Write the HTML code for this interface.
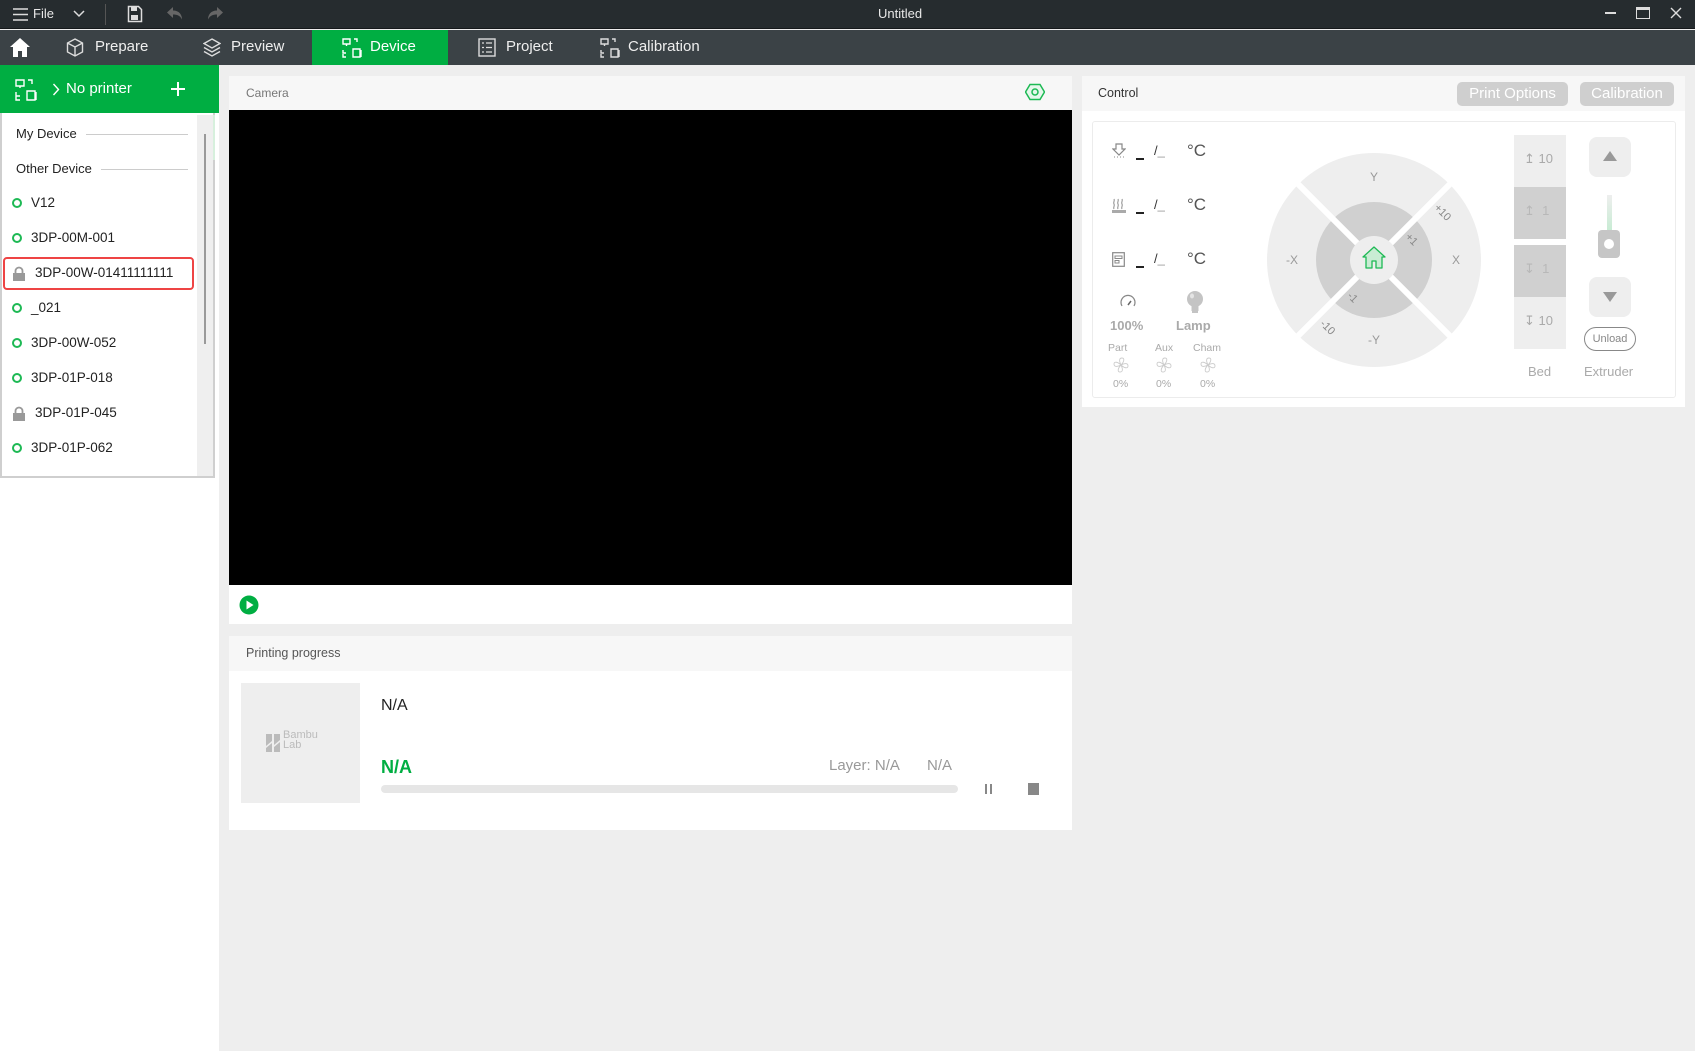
<!DOCTYPE html>
<html><head><meta charset="utf-8"><style>
*{margin:0;padding:0;box-sizing:border-box}
body{width:1695px;height:1051px;overflow:hidden;background:#eeeeee;font-family:"Liberation Sans",sans-serif;position:relative}
.a{position:absolute}
.t{position:absolute;white-space:nowrap}
</style></head><body>
<!-- title bar -->
<div class="a" style="left:0;top:0;width:1695px;height:29px;background:#262c2f;border-bottom:1px solid #15191b"></div>
<svg class="a" style="left:12px;top:7px" width="18" height="15"><path d="M1 2h15M1 7.5h15M1 13h15" stroke="#ddd" stroke-width="1.4"/></svg>
<div class="t" style="left:33px;top:6px;color:#e8e8e8;font-size:13px">File</div>
<svg class="a" style="left:73px;top:9px" width="12" height="10"><path d="M1 2l5 5 5-5" stroke="#ddd" stroke-width="1.5" fill="none"/></svg>
<div class="a" style="left:105px;top:4px;width:1px;height:21px;background:#555"></div>
<svg class="a" style="left:127px;top:5px" width="16" height="18"><path d="M1.5 1.5h10l3 3v12h-13z" fill="none" stroke="#ddd" stroke-width="1.5"/><rect x="4" y="2" width="6" height="4" fill="#ddd"/><rect x="4" y="10" width="7" height="5" fill="#ddd"/></svg>
<svg class="a" style="left:166px;top:6px" width="18" height="15"><path d="M7 1L1 6.5 7 12V8.5c4 0 7 1 9 5 0-5-3-9-9-9z" fill="#666"/></svg>
<svg class="a" style="left:206px;top:6px" width="18" height="15"><path d="M11 1l6 5.5-6 5.5V8.5c-4 0-7 1-9 5 0-5 3-9 9-9z" fill="#666"/></svg>
<div class="t" style="left:878px;top:6px;color:#e8e8e8;font-size:13px">Untitled</div>
<div class="a" style="left:1605px;top:12px;width:11px;height:1.5px;background:#ddd"></div>
<div class="a" style="left:1636px;top:7px;width:14px;height:12px;border:1.5px solid #ddd;border-top-width:3px"></div>
<svg class="a" style="left:1670px;top:7px" width="12" height="12"><path d="M1 1l10 10M11 1L1 11" stroke="#ddd" stroke-width="1.4"/></svg>
<!-- tab bar -->
<div class="a" style="left:0;top:30px;width:1695px;height:35px;background:#3b4246"></div>
<svg class="a" style="left:9px;top:37px" width="22" height="21"><path d="M11 1L1 10h3v10h5v-6h4v6h5V10h3z" fill="#fff"/></svg>
<svg class="a" style="left:66px;top:38px" width="18" height="19"><path d="M9 1l7.5 4v9L9 18 1.5 14V5zM1.5 5L9 9l7.5-4M9 9v9" fill="none" stroke="#ddd" stroke-width="1.4"/></svg>
<div class="t" style="left:95px;top:38px;color:#eee;font-size:15px">Prepare</div>
<svg class="a" style="left:203px;top:38px" width="18" height="19"><path d="M9 1l8 4.5-8 4.5-8-4.5zM1 9.5l8 4.5 8-4.5M1 13.5l8 4.5 8-4.5" fill="none" stroke="#ddd" stroke-width="1.4"/></svg>
<div class="t" style="left:231px;top:38px;color:#eee;font-size:15px">Preview</div>
<div class="a" style="left:312px;top:30px;width:136px;height:35px;background:#00ae42"></div>
<svg class="a" style="left:342px;top:38px" width="20" height="20"><path d="M1 1h7v5H1zM4.5 6v2M12 1h3v3M1 12v3h3M1 19h0M1 16v3h3M19 12v7M11 11h7v8h-7z" fill="none" stroke="#fff" stroke-width="1.4"/></svg>
<div class="t" style="left:370px;top:38px;color:#fff;font-size:15px">Device</div>
<svg class="a" style="left:478px;top:38px" width="18" height="19"><rect x="1" y="1" width="16" height="17" fill="none" stroke="#ddd" stroke-width="1.4"/><path d="M4 5h2M8 5h6M4 9.5h2M8 9.5h6M4 14h2M8 14h6" stroke="#ddd" stroke-width="1.3"/></svg>
<div class="t" style="left:506px;top:38px;color:#eee;font-size:15px">Project</div>
<svg class="a" style="left:600px;top:38px" width="20" height="20"><path d="M1 1h7v5H1zM4.5 6v2M12 1h3v3M1 12v3h3M1 16v3h3M19 12v7M11 11h7v8h-7z" fill="none" stroke="#ddd" stroke-width="1.4"/></svg>
<div class="t" style="left:628px;top:38px;color:#eee;font-size:15px">Calibration</div>
<!-- sidebar -->
<div class="a" style="left:0;top:65px;width:219px;height:986px;background:#fff"></div>
<div class="a" style="left:0;top:65px;width:219px;height:48px;background:#00ae42"></div>
<svg class="a" style="left:15px;top:79px" width="22" height="22"><path d="M1 1h8v6H1zM5 7v2M13 1h4v4M1 13v4h4M1 17v4h4M21 13v8M12 12h8v9h-8z" fill="none" stroke="#fff" stroke-width="1.4"/></svg>
<svg class="a" style="left:52px;top:83px" width="8" height="13"><path d="M1.5 1l5 5.5-5 5.5" fill="none" stroke="#fff" stroke-width="1.4"/></svg>
<div class="t" style="left:66px;top:80px;color:#fff;font-size:15px">No printer</div>
<svg class="a" style="left:170px;top:81px" width="16" height="16"><path d="M8 1v14M1 8h14" stroke="#fff" stroke-width="2"/></svg>
<div class="a" style="left:0;top:113px;width:215px;height:365px;border:2px solid #cfcfcf;border-top:none;background:#fff"></div>
<div class="a" style="left:197px;top:115px;width:16px;height:361px;background:#efefef"></div>
<div class="a" style="left:213px;top:115px;width:2px;height:45px;background:#d7f0dd"></div>
<div class="a" style="left:204px;top:134px;width:2px;height:210px;background:#9a9a9a"></div>
<div class="t" style="left:16px;top:126px;font-size:13px;color:#222">My Device</div>
<div class="a" style="left:86px;top:134px;width:102px;height:1px;background:#ccc"></div>
<div class="t" style="left:16px;top:161px;font-size:13px;color:#222">Other Device</div>
<div class="a" style="left:101px;top:169px;width:87px;height:1px;background:#ccc"></div>
<div class="a" style="left:3px;top:257px;width:191px;height:33px;border:2px solid #ee4444;border-radius:4px"></div>
<div style="position:absolute;left:0;top:0;font-size:13.5px;color:#222">
<div class="a" style="left:12px;top:198px;width:10px;height:10px;border:2px solid #1db954;border-radius:50%"></div><div class="t" style="left:31px;top:195px">V12</div>
<div class="a" style="left:12px;top:233px;width:10px;height:10px;border:2px solid #1db954;border-radius:50%"></div><div class="t" style="left:31px;top:230px">3DP-00M-001</div>
<svg class="a" style="left:12px;top:266px" width="14" height="15"><path d="M3.5 7V5a3.5 3.5 0 0 1 7 0v2" fill="none" stroke="#999" stroke-width="1.8"/><rect x="1" y="7" width="12" height="8" fill="#999"/></svg><div class="t" style="left:35px;top:265px">3DP-00W-01411111111</div>
<div class="a" style="left:12px;top:303px;width:10px;height:10px;border:2px solid #1db954;border-radius:50%"></div><div class="t" style="left:31px;top:300px">_021</div>
<div class="a" style="left:12px;top:338px;width:10px;height:10px;border:2px solid #1db954;border-radius:50%"></div><div class="t" style="left:31px;top:335px">3DP-00W-052</div>
<div class="a" style="left:12px;top:373px;width:10px;height:10px;border:2px solid #1db954;border-radius:50%"></div><div class="t" style="left:31px;top:370px">3DP-01P-018</div>
<svg class="a" style="left:12px;top:406px" width="14" height="15"><path d="M3.5 7V5a3.5 3.5 0 0 1 7 0v2" fill="none" stroke="#999" stroke-width="1.8"/><rect x="1" y="7" width="12" height="8" fill="#999"/></svg><div class="t" style="left:35px;top:405px">3DP-01P-045</div>
<div class="a" style="left:12px;top:443px;width:10px;height:10px;border:2px solid #1db954;border-radius:50%"></div><div class="t" style="left:31px;top:440px">3DP-01P-062</div>
</div>
<!-- camera panel -->
<div class="a" style="left:229px;top:76px;width:843px;height:548px;background:#fff"></div>
<div class="a" style="left:229px;top:76px;width:843px;height:34px;background:#f7f7f7"></div>
<div class="t" style="left:246px;top:86px;font-size:12px;color:#777">Camera</div>
<svg class="a" style="left:1025px;top:83px" width="20" height="18"><path d="M5 1.5h10l4.5 7.5-4.5 7.5H5L.5 9z" fill="#e6f7ec" stroke="#1db954" stroke-width="1.5"/><circle cx="10" cy="9" r="3" fill="none" stroke="#1db954" stroke-width="1.5"/></svg>
<div class="a" style="left:229px;top:110px;width:843px;height:475px;background:#000"></div>
<svg class="a" style="left:239px;top:595px" width="20" height="20"><circle cx="10" cy="10" r="9.5" fill="#00ae42"/><path d="M7.5 5.5v9l7-4.5z" fill="#fff"/></svg>
<!-- printing progress -->
<div class="a" style="left:229px;top:636px;width:843px;height:194px;background:#fff"></div>
<div class="a" style="left:229px;top:636px;width:843px;height:35px;background:#f7f7f7"></div>
<div class="t" style="left:246px;top:646px;font-size:12.5px;color:#555">Printing progress</div>
<div class="a" style="left:241px;top:683px;width:119px;height:120px;background:#eeeeee"></div>
<svg class="a" style="left:265px;top:733px" width="16" height="20"><path d="M1 1h6v7l-6 5zM9 1h6v6L9 12zM1 15l6-5v9H1zM9 14l6-5v10H9z" fill="#bbb"/></svg>
<div class="t" style="left:283px;top:730px;font-size:11px;color:#bbb;line-height:10px">Bambu<br>Lab</div>
<div class="t" style="left:381px;top:697px;font-size:16px;color:#222">N/A</div>
<div class="t" style="left:381px;top:757px;font-size:18px;font-weight:bold;color:#00ae42">N/A</div>
<div class="t" style="left:829px;top:757px;font-size:15px;color:#999">Layer: N/A</div>
<div class="t" style="left:927px;top:757px;font-size:15px;color:#999">N/A</div>
<div class="a" style="left:381px;top:785px;width:577px;height:8px;background:#e6e6e6;border-radius:4px"></div>
<div class="a" style="left:985px;top:784px;width:2px;height:10px;background:#888"></div>
<div class="a" style="left:990px;top:784px;width:2px;height:10px;background:#888"></div>
<div class="a" style="left:1028px;top:783px;width:11px;height:12px;background:#888"></div>
<!-- control panel -->
<div class="a" style="left:1082px;top:76px;width:603px;height:331px;background:#fff"></div>
<div class="a" style="left:1082px;top:76px;width:603px;height:35px;background:#f7f7f7"></div>
<div class="t" style="left:1098px;top:86px;font-size:12.5px;color:#333">Control</div>
<div class="a" style="left:1457px;top:82px;width:111px;height:24px;background:#cfcfcf;border-radius:5px;color:#fff;font-size:15px;text-align:center;line-height:24px">Print Options</div>
<div class="a" style="left:1580px;top:82px;width:94px;height:24px;background:#cfcfcf;border-radius:5px;color:#fff;font-size:15px;text-align:center;line-height:24px">Calibration</div>
<div class="a" style="left:1092px;top:121px;width:584px;height:277px;border:1px solid #ececec;border-radius:3px"></div>
<!-- temps -->
<svg class="a" style="left:1112px;top:143px" width="14" height="16"><path d="M4 1h6v5h3l-6 6-6-6h3z" fill="none" stroke="#888" stroke-width="1.2"/><path d="M2 14h1M5 14h1M8 14h1M11 14h1" stroke="#888"/></svg>
<svg class="a" style="left:1112px;top:198px" width="14" height="15"><path d="M2 1c1 2-1 3 0 5s-1 3 0 5M6 1c1 2-1 3 0 5s-1 3 0 5M10 1c1 2-1 3 0 5s-1 3 0 5" fill="none" stroke="#888" stroke-width="1"/><rect x="0" y="12" width="14" height="3" fill="#aaa"/></svg>
<svg class="a" style="left:1112px;top:252px" width="13" height="15"><rect x="0.7" y="0.7" width="11.6" height="13.6" fill="none" stroke="#888" stroke-width="1.2"/><rect x="3" y="4" width="7" height="2.5" fill="none" stroke="#888"/><rect x="3" y="8.5" width="4" height="2.5" fill="none" stroke="#888"/></svg>
<div style="position:absolute;left:0;top:0">
<div class="a" style="left:1136px;top:158px;width:8px;height:2px;background:#222"></div><div class="t" style="left:1154px;top:143px;font-size:13px;color:#333">/<span style="color:#999">_</span></div><div class="t" style="left:1187px;top:141px;font-size:17px;color:#555">°C</div>
<div class="a" style="left:1136px;top:212px;width:8px;height:2px;background:#222"></div><div class="t" style="left:1154px;top:197px;font-size:13px;color:#333">/<span style="color:#999">_</span></div><div class="t" style="left:1187px;top:195px;font-size:17px;color:#555">°C</div>
<div class="a" style="left:1136px;top:266px;width:8px;height:2px;background:#222"></div><div class="t" style="left:1154px;top:251px;font-size:13px;color:#333">/<span style="color:#999">_</span></div><div class="t" style="left:1187px;top:249px;font-size:17px;color:#555">°C</div>
</div>
<svg class="a" style="left:1120px;top:294px" width="16" height="14"><path d="M2 12A7 7 0 1 1 14 12" fill="none" stroke="#888" stroke-width="1.2"/><path d="M8 11l3-4" stroke="#666" stroke-width="1.5"/></svg>
<svg class="a" style="left:1186px;top:290px" width="18" height="25"><circle cx="9" cy="9" r="8" fill="#c4c4c4"/><rect x="5.5" y="15" width="7" height="6" fill="#c4c4c4"/><path d="M6 22h6" stroke="#c4c4c4" stroke-width="2"/><ellipse cx="6" cy="6" rx="2" ry="2.5" fill="#e4e4e4"/></svg>
<div class="t" style="left:1110px;top:318px;font-size:13px;font-weight:bold;color:#aaa">100%</div>
<div class="t" style="left:1176px;top:318px;font-size:13px;font-weight:bold;color:#aaa">Lamp</div>
<div class="t" style="left:1108px;top:342px;font-size:10.5px;color:#aaa">Part</div>
<div class="t" style="left:1155px;top:342px;font-size:10.5px;color:#aaa">Aux</div>
<div class="t" style="left:1193px;top:342px;font-size:10.5px;color:#aaa">Cham</div>
<svg width="0" height="0" style="position:absolute"><defs><g id="fan"><path d="M8 8C6 4 6 1 9 1s2 4-1 7zM8 8c4-2 7-2 7 1s-4 2-7-1zM8 8c2 4 2 7-1 7s-2-4 1-7zM8 8C4 10 1 10 1 7s4-2 7 1z" fill="none" stroke="#ccc" stroke-width="0.9"/></g></defs></svg>
<svg class="a" style="left:1113px;top:357px" width="16" height="16"><use href="#fan"/></svg>
<svg class="a" style="left:1156px;top:357px" width="16" height="16"><use href="#fan"/></svg>
<svg class="a" style="left:1200px;top:357px" width="16" height="16"><use href="#fan"/></svg>
<div class="t" style="left:1113px;top:378px;font-size:10.5px;color:#aaa">0%</div>
<div class="t" style="left:1156px;top:378px;font-size:10.5px;color:#aaa">0%</div>
<div class="t" style="left:1200px;top:378px;font-size:10.5px;color:#aaa">0%</div>
<!-- jog wheel -->
<svg class="a" style="left:1266px;top:152px" width="216" height="216">
<circle cx="108" cy="108" r="107" fill="#eeeeee"/>
<circle cx="108" cy="108" r="58" fill="#d0d0d0"/>
<path d="M30 30L186 186M186 30L30 186" stroke="#fff" stroke-width="6"/>
<circle cx="108" cy="108" r="24" fill="#eeeeee"/>
<path d="M108 95l-11 10h3v11h6v-7h4v7h6v-11h3z" fill="#c9ecd4" stroke="#1db954" stroke-width="1.3" stroke-linejoin="round"/>
<g font-family="Liberation Sans" font-size="12" fill="#999" text-anchor="middle">
<text x="108" y="29">Y</text><text x="108" y="192">-Y</text><text x="26" y="112">-X</text><text x="190" y="112">X</text>
<g fill="#888" font-size="11">
<text x="177" y="64" transform="rotate(45 177 60)">+10</text>
<text x="146" y="91" transform="rotate(45 146 87)">+1</text>
<text x="87" y="149" transform="rotate(45 87 145)">-1</text>
<text x="62" y="179" transform="rotate(45 62 175)">-10</text>
</g></g></svg>
<!-- bed -->
<div class="a" style="left:1514px;top:135px;width:52px;height:52px;background:#eeeeee"></div>
<div class="a" style="left:1514px;top:187px;width:52px;height:52px;background:#d0d0d0"></div>
<div class="a" style="left:1514px;top:245px;width:52px;height:52px;background:#d0d0d0"></div>
<div class="a" style="left:1514px;top:297px;width:52px;height:52px;background:#eeeeee"></div>
<div class="t" style="left:1524px;top:151px;font-size:13px;color:#aaa">↥ 10</div>
<div class="t" style="left:1524px;top:203px;font-size:13px;color:#b8b8b8">↥ &nbsp;1</div>
<div class="t" style="left:1524px;top:261px;font-size:13px;color:#b8b8b8">↧ &nbsp;1</div>
<div class="t" style="left:1524px;top:313px;font-size:13px;color:#aaa">↧ 10</div>
<div class="t" style="left:1528px;top:364px;font-size:13px;color:#aaa">Bed</div>
<!-- extruder -->
<div class="a" style="left:1589px;top:137px;width:42px;height:40px;background:#eeeeee;border-radius:8px"></div>
<svg class="a" style="left:1602px;top:150px" width="16" height="12"><path d="M8 1L15 11H1z" fill="#999"/></svg>
<div class="a" style="left:1589px;top:277px;width:42px;height:40px;background:#eeeeee;border-radius:8px"></div>
<svg class="a" style="left:1602px;top:291px" width="16" height="12"><path d="M1 1h14L8 11z" fill="#999"/></svg>
<div class="a" style="left:1607px;top:195px;width:5px;height:35px;background:linear-gradient(#eee,#c8ecd4)"></div>
<div class="a" style="left:1598px;top:230px;width:22px;height:28px;background:#c6c6c6;border-radius:4px"></div>
<div class="a" style="left:1604px;top:239px;width:10px;height:10px;background:#fff;border-radius:50%"></div>
<div class="a" style="left:1584px;top:327px;width:52px;height:24px;border:1px solid #888;border-radius:12px;font-size:11px;color:#888;text-align:center;line-height:22px">Unload</div>
<div class="t" style="left:1584px;top:364px;font-size:13px;color:#aaa">Extruder</div>
</body></html>
